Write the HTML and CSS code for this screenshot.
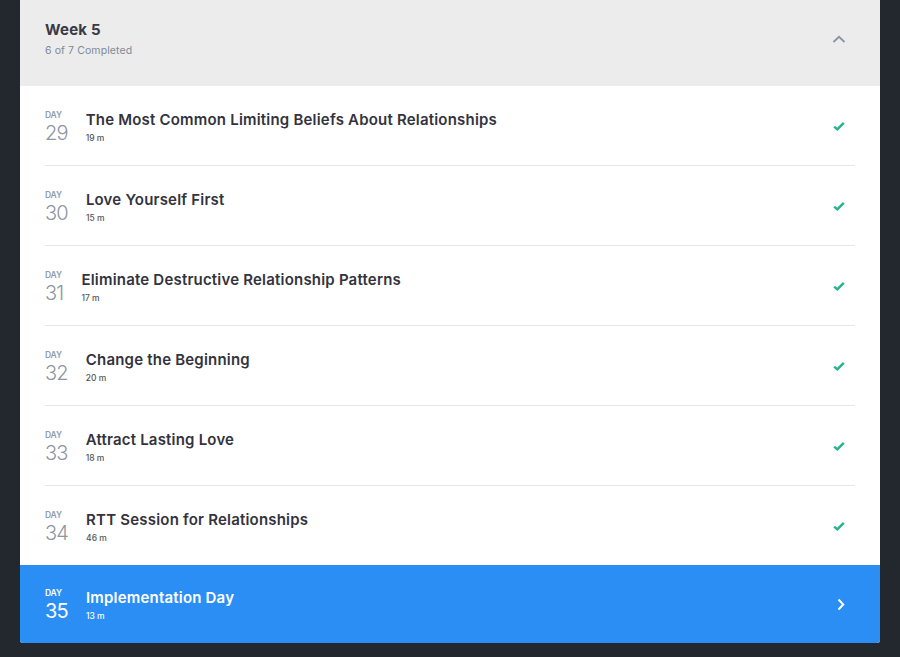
FILE: index.html
```html
<!DOCTYPE html>
<html lang="en">
  <head>
    <meta charset="UTF-8" />
    <title>Week 5</title>
    <link rel="stylesheet" href="styles.css">
  </head>
  <body>
    <div class="week">
      <div class="week-header">
        <div>
          <h2>Week 5</h2>
          <p class="progress">6 of 7 Completed</p>
        </div>
        <svg class="toggle" width="14" height="8" viewBox="0 0 14 8">
          <path d="M1.5 7 L7 1.8 L12.5 7" fill="none" stroke="#8a94a0" stroke-width="1.8"/>
        </svg>
      </div>

      <ul class="days">
        <li class="day done">
          <div class="day-num"><span>Day</span>29</div>
          <div class="day-info">
            <h3>The Most Common Limiting Beliefs About Relationships</h3>
            <p>19 m</p>
          </div>
          <svg class="check" width="12" height="10" viewBox="0 0 12 10"><path d="M1.2 5.6 L4.3 8.3 L10.8 1.8" fill="none" stroke="#21b689" stroke-width="2.4"/></svg>
        </li>
        <li class="day done">
          <div class="day-num"><span>Day</span>30</div>
          <div class="day-info">
            <h3>Love Yourself First</h3>
            <p>15 m</p>
          </div>
          <svg class="check" width="12" height="10" viewBox="0 0 12 10"><path d="M1.2 5.6 L4.3 8.3 L10.8 1.8" fill="none" stroke="#21b689" stroke-width="2.4"/></svg>
        </li>
        <li class="day done">
          <div class="day-num"><span>Day</span>31</div>
          <div class="day-info">
            <h3>Eliminate Destructive Relationship Patterns</h3>
            <p>17 m</p>
          </div>
          <svg class="check" width="12" height="10" viewBox="0 0 12 10"><path d="M1.2 5.6 L4.3 8.3 L10.8 1.8" fill="none" stroke="#21b689" stroke-width="2.4"/></svg>
        </li>
        <li class="day done">
          <div class="day-num"><span>Day</span>32</div>
          <div class="day-info">
            <h3>Change the Beginning</h3>
            <p>20 m</p>
          </div>
          <svg class="check" width="12" height="10" viewBox="0 0 12 10"><path d="M1.2 5.6 L4.3 8.3 L10.8 1.8" fill="none" stroke="#21b689" stroke-width="2.4"/></svg>
        </li>
        <li class="day done">
          <div class="day-num"><span>Day</span>33</div>
          <div class="day-info">
            <h3>Attract Lasting Love</h3>
            <p>18 m</p>
          </div>
          <svg class="check" width="12" height="10" viewBox="0 0 12 10"><path d="M1.2 5.6 L4.3 8.3 L10.8 1.8" fill="none" stroke="#21b689" stroke-width="2.4"/></svg>
        </li>
        <li class="day done">
          <div class="day-num"><span>Day</span>34</div>
          <div class="day-info">
            <h3>RTT Session for Relationships</h3>
            <p>46 m</p>
          </div>
          <svg class="check" width="12" height="10" viewBox="0 0 12 10"><path d="M1.2 5.6 L4.3 8.3 L10.8 1.8" fill="none" stroke="#21b689" stroke-width="2.4"/></svg>
        </li>
      </ul>

      <div class="day current">
        <div class="day-num"><span>Day</span>35</div>
        <div class="day-info">
          <h3>Implementation Day</h3>
          <p>13 m</p>
        </div>
        <svg class="arrow" width="8" height="13" viewBox="0 0 8 13"><path d="M1.5 1.5 L6.2 6.5 L1.5 11.5" fill="none" stroke="#fff" stroke-width="2"/></svg>
      </div>
    </div>
  </body>
</html>
```

FILE: styles.css
```css
body {
  margin: 0;
  background-color: #23272e;
  font-family: Inter, "Noto Sans", sans-serif;
  height: 657px;
  overflow: hidden;
}

.week {
  margin: 0 20px;
  background-color: #fff;
  border-radius: 0 0 3px 3px;
  overflow: hidden;
}

.week-header {
  height: 86px;
  box-sizing: border-box;
  padding: 20px 34px 0 25px;
  background-color: #ececec;
  display: flex;
  justify-content: space-between;
  align-items: flex-start;
}

.week-header h2 {
  margin: 0;
  font-size: 15px;
  font-weight: 700;
  color: #3a3a46;
  line-height: 20px;
  letter-spacing: 0.2px;
}

.progress {
  margin: 4px 0 0;
  font-size: 10.5px;
  color: #7d8a99;
  line-height: 14px;
  letter-spacing: 0.1px;
}

.toggle {
  margin-top: 15px;
}

.days {
  list-style: none;
  margin: 0 25px;
  padding: 0;
}

.day {
  height: 80px;
  box-sizing: border-box;
  display: flex;
  align-items: center;
  border-bottom: 1px solid #e6e6e6;
  padding-right: 10px;
}

.days .day:last-child {
  border-bottom: none;
  height: 79px;
}

.day-num {
  display: flex;
  flex-direction: column;
  font-size: 20px;
  font-weight: 300;
  line-height: 20px;
  letter-spacing: -0.8px;
  color: #8f969e;
  margin-right: 18px;
  margin-top: 1px;
}

.day-num span {
  font-size: 8.5px;
  font-weight: 600;
  text-transform: uppercase;
  line-height: 11px;
  letter-spacing: -0.2px;
  color: #8e9cad;
  margin-bottom: 2px;
}

.day-info {
  flex: 1;
  padding-top: 3px;
}

.day-info h3 {
  margin: 0;
  font-size: 15px;
  font-weight: 600;
  color: #33333d;
  line-height: 18px;
  letter-spacing: 0.2px;
}

.day-info p {
  margin: 4px 0 0;
  font-size: 8.5px;
  font-weight: 500;
  color: #555;
  line-height: 11px;
}

.current {
  background-color: #2b8ef5;
  border-bottom: none;
  height: 78px;
  padding: 0 35px 0 25px;
}

.current .day-num,
.current .day-num span,
.current .day-info h3,
.current .day-info p {
  color: #fff;
}

.current .day-num {
  font-weight: 400;
}
```
